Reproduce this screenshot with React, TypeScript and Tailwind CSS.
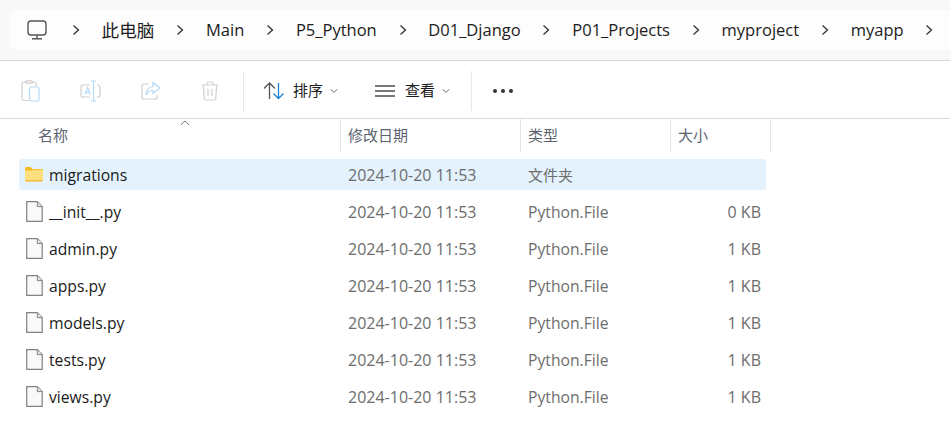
import { Fragment } from "react";

const crumbs = ["Main", "P5_Python", "D01_Django", "P01_Projects", "myproject", "myapp"];

const files = [
  { name: "__init__.py", size: "0 KB" },
  { name: "admin.py", size: "1 KB" },
  { name: "apps.py", size: "1 KB" },
  { name: "models.py", size: "1 KB" },
  { name: "tests.py", size: "1 KB" },
  { name: "views.py", size: "1 KB" },
];

const font = "font-['Open_Sans','Noto_Sans_CJK_SC',sans-serif]";

function Chevron() {
  return (
    <svg width="10" height="12" viewBox="0 0 10 12" fill="none" stroke="#333" strokeWidth="1.3">
      <path d="M2.5 1.5 7.5 6 2.5 10.5" />
    </svg>
  );
}

function SmallChevron() {
  return (
    <svg width="8" height="6" viewBox="0 0 8 6" fill="none" stroke="#666" strokeWidth="1">
      <path d="M.8 1.2 4 4.4l3.2-3.2" />
    </svg>
  );
}

function FileIcon() {
  return (
    <svg width="17" height="21" viewBox="0 0 17 21" fill="#f9f9f9" stroke="#828282" strokeWidth="1.2">
      <path d="M.7.7h10.600l4.900 4.900v14.700H.7z" />
      <path d="M11.300.7v4.900h4.900" fill="#e4e4e4" strokeWidth="1" />
    </svg>
  );
}

function FolderIcon() {
  return (
    <svg width="18" height="15" viewBox="0 0 18 15">
      <path d="M0 1.500A1.500 1.500 0 0 1 1.500 0h4l2 2H18v2H0z" fill="#f6b81f" />
      <path d="M0 3.500h7l1.300-.8H18V13a1.500 1.500 0 0 1-1.500 1.500h-15A1.500 1.500 0 0 1 0 13z" fill="#fddf80" />
      <path d="M0 13h18a1.500 1.500 0 0 1-1.500 1.500h-15A1.500 1.500 0 0 1 0 13z" fill="#f3bd3c" />
    </svg>
  );
}

function ActionIcons() {
  const gray = "#cfcfcf";
  const blue = "#b5d9f5";
  return (
    <div className="flex w-[243px] items-center gap-[40px] pl-[21px]">
      <svg width="19" height="22" viewBox="0 0 19 22" fill="none" strokeWidth="1.2">
        <path d="M8 20.500H3A2 2 0 0 1 1 18.500V4a2 2 0 0 1 2-2h10a2 2 0 0 1 2 2v2" stroke={gray} />
        <rect x="4.500" y=".8" width="7" height="2.400" rx="1" stroke={gray} fill="#fff" />
        <rect x="8.500" y="7" width="9.500" height="14" rx="2" stroke={blue} />
      </svg>
      <svg width="21" height="22" viewBox="0 0 21 22" fill="none" strokeWidth="1.2">
        <path d="M10 5H3a2 2 0 0 0-2 2v8a2 2 0 0 0 2 2h7M17 5h1a2 2 0 0 1 2 2v8a2 2 0 0 1-2 2h-1" stroke={gray} />
        <path d="M11 1h5M13.500 1v20M11 21h5M5 14.500l2.700-7 2.700 7M6 12.300h3.400" stroke={blue} />
      </svg>
      <svg width="20" height="20" viewBox="0 0 20 20" fill="none" strokeWidth="1.2">
        <path d="M8 3H3a2 2 0 0 0-2 2v11a2 2 0 0 0 2 2h11a2 2 0 0 0 2-2v-2" stroke={gray} />
        <path d="M12 1.500 19 7l-7 5.500V9.500c-3.500 0-5.500 1.500-7 4.500 0-5 3-8.500 7-8.500z" stroke={blue} />
      </svg>
      <svg width="18" height="20" viewBox="0 0 18 20" fill="none" stroke={gray} strokeWidth="1.2">
        <path d="M.5 4h17M6 4V2.500A1.500 1.500 0 0 1 7.500 1h3A1.500 1.500 0 0 1 12 2.500V4M2.300 4l1 13.500A1.700 1.700 0 0 0 5 19h8a1.700 1.700 0 0 0 1.700-1.500l1-13.500M7 8v7M11 8v7" />
      </svg>
    </div>
  );
}

function Row({ icon, name, kind, cjk, size, selected }: { icon: React.ReactNode; name: string; kind: string; cjk?: boolean; size?: string; selected?: boolean }) {
  return (
    <div className={`ml-[19px] flex h-[31px] w-[747px] items-center rounded-[2px] ${selected ? "bg-[#e4f2fd]" : ""}`}>
      <div className={`flex w-[30px] ${selected ? "pl-[6px]" : "pl-[7px]"}`}>{icon}</div>
      <div className="w-[299px] pt-[2px] text-[15.7px] text-[#1a1a1a]">{name}</div>
      <div className="w-[180px] text-[#6d6d6d]">2024-10-20 11:53</div>
      <div className={`w-[150px] text-[#6d6d6d] ${cjk ? "pt-[2px] text-[15px]" : "pt-[2px] text-[15.7px]"}`}>{kind}</div>
      <div className="w-[83px] text-right text-[#6d6d6d]">{size}</div>
    </div>
  );
}

export default function App() {
  return (
    <div className={`h-[421px] w-[950px] overflow-hidden bg-white ${font}`}>
      <div className="h-[61px] border-b border-[#d9d9d9] bg-[#f8f8f8] pt-[10px] pl-[10px]">
        <div className="flex h-[40px] items-center gap-[20.8px] rounded-l-[6px] bg-[#fdfdfd] pl-[17px] text-[16.5px] text-[#1c1c1c]">
          <svg width="20" height="20" viewBox="0 0 20 20" fill="none" stroke="#555" strokeWidth="1.4">
            <rect x="1" y="1" width="18" height="14" rx="3" />
            <path d="M10 15v3.500M5 18.700h10" />
          </svg>
          <span className="ml-[3px]"><Chevron /></span>
          <span className="text-[17.6px]">此电脑</span>
          <Chevron />
          {crumbs.map((c) => (
            <Fragment key={c}>
              <span>{c}</span>
              <Chevron />
            </Fragment>
          ))}
        </div>
      </div>

      <div className="flex h-[58px] items-center border-b border-[#d9d9d9] pt-[2px] text-[15px] text-[#1c1c1c]">
        <ActionIcons />
        <div className="flex h-[40px] w-[228px] items-center border-l border-[#e8e8e8] pl-[19px]">
          <svg width="22" height="18" viewBox="0 0 22 18" fill="none" strokeWidth="1.3">
            <path d="M1 6.500 6.500 1 12 6.500M6.500 1v16" stroke="#555" />
            <path d="M10.500 11.500 15.500 16.500 20.500 11.500M15.500 1v15.500" stroke="#1a7fd6" />
          </svg>
          <span className="ml-[8px]">排序</span>
          <span className="ml-[7px]"><SmallChevron /></span>
          <span className="ml-[37px] flex w-[20px] flex-col gap-[3px]">
            <i className="h-[2px] bg-[#777]" />
            <i className="h-[2px] bg-[#777]" />
            <i className="h-[2px] bg-[#777]" />
          </span>
          <span className="ml-[10px]">查看</span>
          <span className="ml-[7px]"><SmallChevron /></span>
        </div>
        <div className="flex h-[40px] items-center gap-[4px] border-l border-[#e8e8e8] pl-[21px]">
          <i className="size-[4px] rounded-full bg-[#333]" />
          <i className="size-[4px] rounded-full bg-[#333]" />
          <i className="size-[4px] rounded-full bg-[#333]" />
        </div>
      </div>

      <div className="relative flex h-[33px] items-center text-[15px] text-[#5d6470]">
        <svg className="absolute top-[1px] left-[180px]" width="10" height="6" viewBox="0 0 10 6" fill="none" stroke="#777" strokeWidth="1">
          <path d="M.8 5 5 1l4.200 4" />
        </svg>
        <div className="h-full w-[340px] pt-[5px] pl-[38px]">名称</div>
        <div className="h-full w-[180px] border-l border-[#e5e5e5] pt-[5px] pl-[7px]">修改日期</div>
        <div className="h-full w-[150px] border-l border-[#e5e5e5] pt-[5px] pl-[7px]">类型</div>
        <div className="h-full w-[101px] border-x border-[#e5e5e5] pt-[5px] pl-[7px]">大小</div>
      </div>

      <div className="flex flex-col gap-[6px] pt-[7px] text-[16px]">
        <Row icon={<FolderIcon />} name="migrations" kind="文件夹" cjk selected />
        {files.map((f) => (
          <Row key={f.name} icon={<FileIcon />} name={f.name} kind="Python.File" size={f.size} />
        ))}
      </div>
    </div>
  );
}
